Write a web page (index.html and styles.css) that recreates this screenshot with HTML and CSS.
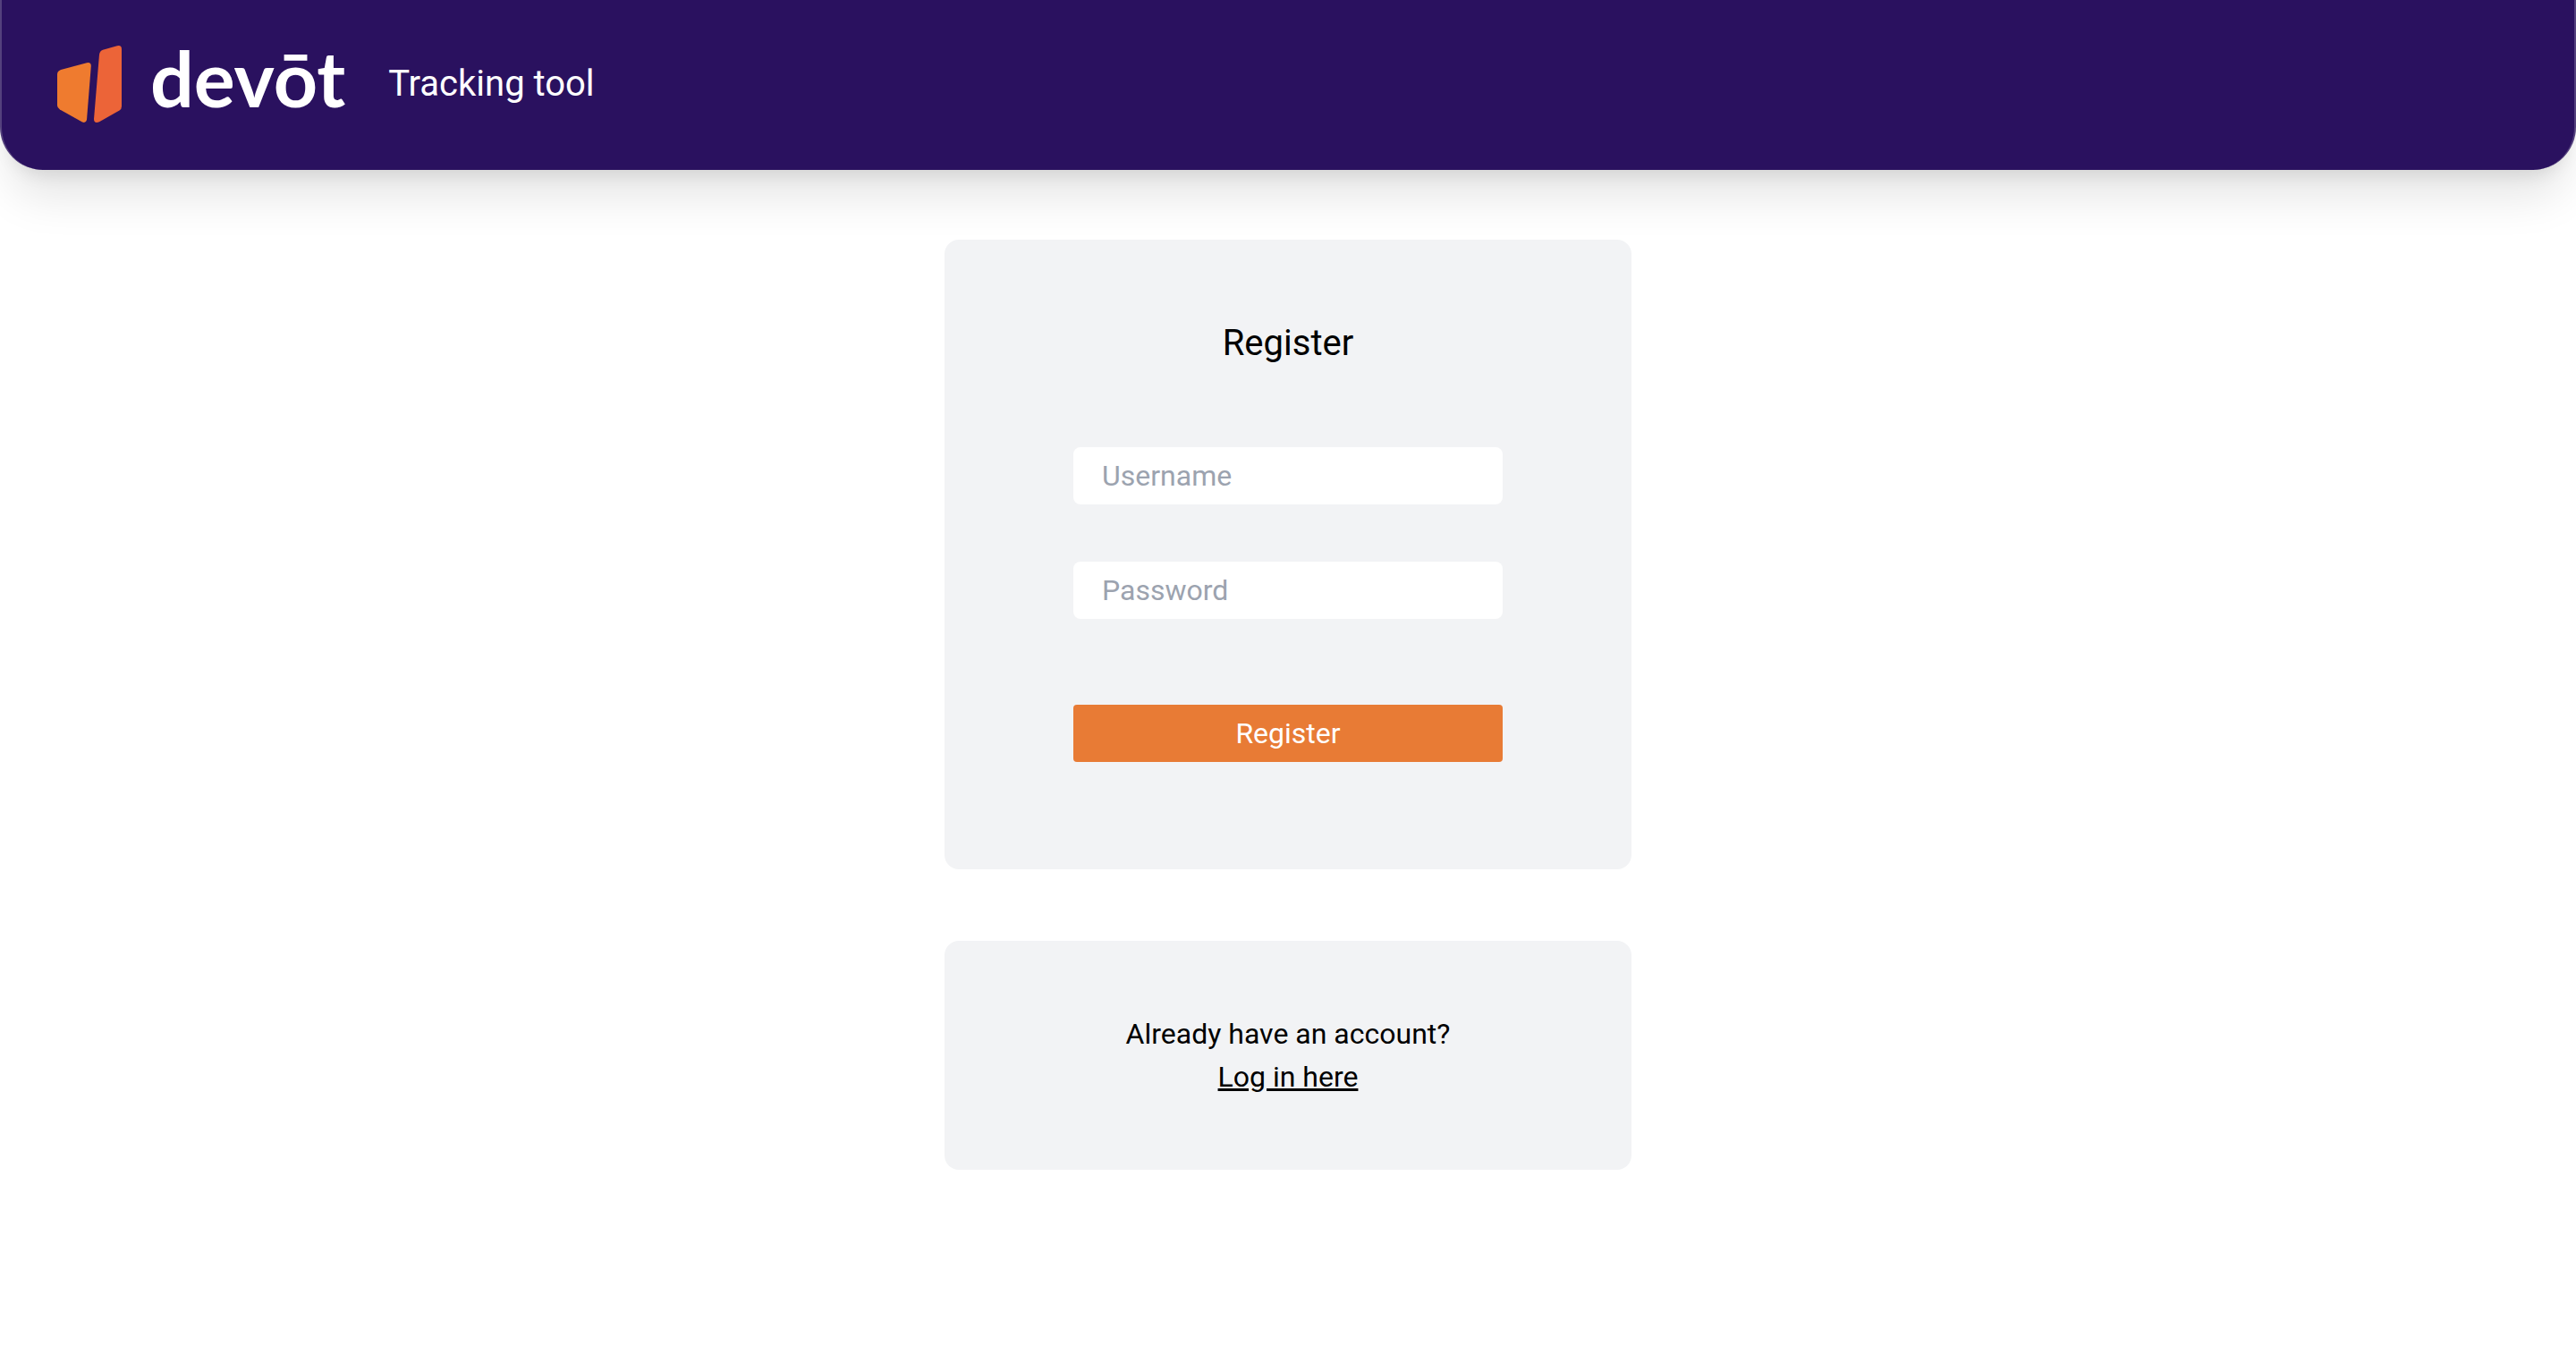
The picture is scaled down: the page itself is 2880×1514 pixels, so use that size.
FILE: index.html
```html
<!DOCTYPE html>
<html lang="en">
<head>
  <meta charset="utf-8">
  <meta name="viewport" content="width=device-width, initial-scale=1">
  <title>Devōt Tracking tool – Register</title>
  <link rel="stylesheet" href="styles.css">
</head>
<body>
  <header class="header">
    <a class="brand" href="#">
      <svg class="brand-mark" viewBox="0 0 72 86" aria-hidden="true">
        <path fill="#ef7b2f" d="M4 27 33 19.200Q38 18.200 37.800 23L33 83Q32 87 28 85.500L3 71.500Q0 69.500 0 67V32Q0 28.500 4 27Z"/>
        <path fill="#ec6438" d="M51 4.800 67 .3Q72-.8 72 4V68Q72 71 69.500 72.500L47 85.300Q41 87.500 41 82L47 10Q47.500 6 51 4.800Z"/>
      </svg>
      <span class="brand-name">devōt</span>
    </a>
    <span class="header-title">Tracking tool</span>
  </header>

  <main class="content">
    <form class="card register">
      <h1 class="card-title">Register</h1>
      <input class="field" type="text" placeholder="Username" aria-label="Username">
      <input class="field" type="password" placeholder="Password" aria-label="Password">
      <button class="submit" type="submit">Register</button>
    </form>
    <section class="card login">
      <p class="login-text">Already have an account?</p>
      <a class="login-link" href="#">Log in here</a>
    </section>
  </main>
</body>
</html>
```

FILE: styles.css
```css
*,
*::before,
*::after {
  box-sizing: border-box;
}

body {
  margin: 0;
  background: #fff;
  color: #000;
  font-family: Roboto, "Liberation Sans", sans-serif;
  font-size: 32px;
  line-height: 48px;
}

.header {
  display: flex;
  align-items: center;
  gap: 48px;
  height: 190px;
  padding: 0 62px 2px;
  border: solid #54417d;
  border-width: 0 2px;
  border-radius: 0 0 48px 48px;
  background: #2a115f;
  color: #fff;
  box-shadow:
    0 40px 50px -10px rgba(0, 0, 0, 0.1),
    0 16px 20px -12px rgba(0, 0, 0, 0.1);
}

.brand {
  display: flex;
  align-items: center;
  gap: 32px;
  color: inherit;
  text-decoration: none;
}

.brand-mark {
  width: 72px;
  height: 86px;
}

.brand-name {
  padding-bottom: 14px;
  font-family: Lato, "Liberation Sans", sans-serif;
  font-size: 86px;
  font-weight: 700;
  line-height: 96px;
}

.header-title {
  font-size: 40px;
  line-height: 56px;
}

.content {
  display: flex;
  flex-direction: column;
  align-items: center;
  gap: 80px;
  padding: 78px 32px;
}

.card {
  display: flex;
  flex-direction: column;
  align-items: center;
  width: 100%;
  max-width: 768px;
  border-radius: 16px;
  background: #f2f3f5;
}

.register {
  gap: 64px;
  padding: 88px 144px 120px;
}

.card-title {
  margin: 0 0 24px;
  font-size: 40px;
  font-weight: 400;
  line-height: 56px;
}

.field,
.submit {
  width: 100%;
  height: 64px;
  border: 0;
  font: inherit;
}

.field {
  padding: 0 32px;
  border-radius: 8px;
  background: #fff;
  color: #000;
}

.field::placeholder {
  color: #9ca3af;
  opacity: 1;
}

.submit {
  margin-top: 32px;
  border-radius: 4px;
  background: #e87b35;
  color: #fff;
  cursor: pointer;
}

.login {
  padding: 80px 32px;
}

.login-text {
  margin: 0;
}

.login-link {
  color: inherit;
}
```
